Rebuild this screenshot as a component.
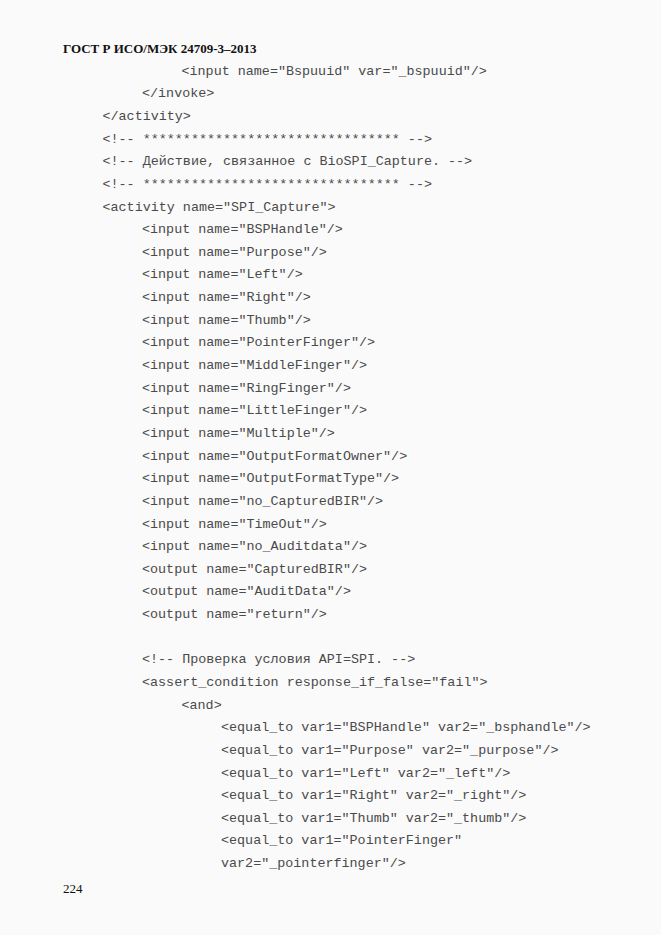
const lines: [number, string][] = [
  [3, '<input name="Bspuuid" var="_bspuuid"/>'],
  [2, '</invoke>'],
  [1, '</activity>'],
  [1, '<!-- ******************************** -->'],
  [1, '<!-- Действие, связанное с BioSPI_Capture. -->'],
  [1, '<!-- ******************************** -->'],
  [1, '<activity name="SPI_Capture">'],
  [2, '<input name="BSPHandle"/>'],
  [2, '<input name="Purpose"/>'],
  [2, '<input name="Left"/>'],
  [2, '<input name="Right"/>'],
  [2, '<input name="Thumb"/>'],
  [2, '<input name="PointerFinger"/>'],
  [2, '<input name="MiddleFinger"/>'],
  [2, '<input name="RingFinger"/>'],
  [2, '<input name="LittleFinger"/>'],
  [2, '<input name="Multiple"/>'],
  [2, '<input name="OutputFormatOwner"/>'],
  [2, '<input name="OutputFormatType"/>'],
  [2, '<input name="no_CapturedBIR"/>'],
  [2, '<input name="TimeOut"/>'],
  [2, '<input name="no_Auditdata"/>'],
  [2, '<output name="CapturedBIR"/>'],
  [2, '<output name="AuditData"/>'],
  [2, '<output name="return"/>'],
  [0, ''],
  [2, '<!-- Проверка условия API=SPI. -->'],
  [2, '<assert_condition response_if_false="fail">'],
  [3, '<and>'],
  [4, '<equal_to var1="BSPHandle" var2="_bsphandle"/>'],
  [4, '<equal_to var1="Purpose" var2="_purpose"/>'],
  [4, '<equal_to var1="Left" var2="_left"/>'],
  [4, '<equal_to var1="Right" var2="_right"/>'],
  [4, '<equal_to var1="Thumb" var2="_thumb"/>'],
  [4, '<equal_to var1="PointerFinger"'],
  [4, 'var2="_pointerfinger"/>'],
]

const indent = ['pl-0', 'pl-[39.5px]', 'pl-[79px]', 'pl-[118.5px]', 'pl-[158px]']

export default function App() {
  return (
    <div className="min-h-[935px] w-[661px] bg-[#fafafa] px-[63px] pt-[40px]">
      <div className="text-[13px] leading-[18px] font-bold text-[#111] [font-family:'Liberation_Serif',serif]">
        ГОСТ Р ИСО/МЭК 24709-3–2013
      </div>
      <div className="mt-[2.7px] text-[13.4px] text-[#4a4a4a] [font-family:'Liberation_Mono',monospace]">
        {lines.map(([lvl, text], i) => (
          <div key={i} className={`h-[22.65px] leading-[22.65px] whitespace-pre ${indent[lvl]}`}>
            {text}
          </div>
        ))}
      </div>
      <div className="mt-[4px] text-[13px] leading-[18px] text-[#111] [font-family:'Liberation_Serif',serif]">
        224
      </div>
    </div>
  )
}
